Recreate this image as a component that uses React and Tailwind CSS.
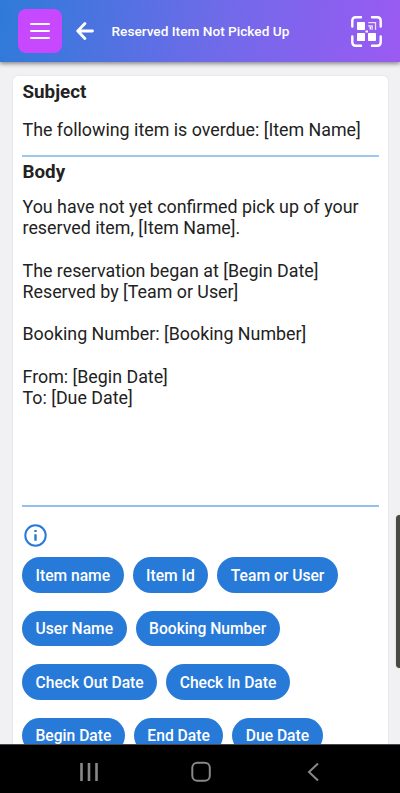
import React from "react";

const chipRows = [
  ["Item name", "Item Id", "Team or User"],
  ["User Name", "Booking Number"],
  ["Check Out Date", "Check In Date"],
  ["Begin Date", "End Date", "Due Date"],
];

const message = `You have not yet confirmed pick up of your
reserved item, [Item Name].

The reservation began at [Begin Date]
Reserved by [Team or User]

Booking Number: [Booking Number]

From: [Begin Date]
To: [Due Date]`;

const BackIcon = () => (
  <svg width="18" height="18" viewBox="0 0 18 18" fill="none">
    <path
      d="M8.9 1.6 1.7 9l7.2 7.4M2 9h14.5"
      stroke="white"
      strokeWidth="2.8"
      strokeLinecap="round"
      strokeLinejoin="round"
    />
  </svg>
);

const ScanIcon = () => (
  <svg width="31" height="31" viewBox="0 0 31 31" fill="none">
    <path
      d="M1.3 10.5V4.8Q1.3 1.3 4.8 1.3H10M21 1.3h5.2q3.5 0 3.5 3.5v5.7M29.7 20.5v5.7q0 3.5-3.5 3.5H21M10 29.7H4.8q-3.5 0-3.5-3.5v-5.7"
      stroke="white"
      strokeWidth="2.4"
      strokeLinecap="round"
    />
    <rect x="6" y="6" width="8" height="8" rx="0.7" fill="white" />
    <rect x="6" y="17" width="8" height="8" rx="0.7" fill="white" />
    <rect x="17" y="17" width="8" height="8" rx="0.7" fill="white" />
    <rect x="14.5" y="14.5" width="2.5" height="2" fill="white" />
    <path d="M17.2 6.7h7.3v7.3M17.2 10h4v3.8" stroke="white" strokeOpacity="0.8" strokeWidth="1.3" />
    <rect x="18.6" y="11" width="1.5" height="2.5" fill="white" />
  </svg>
);

const Header = () => (
  <header className="relative z-10 h-[62px] shrink-0 flex items-center pl-[18px] pr-[18px] bg-[linear-gradient(100deg,#2e7bd9_0%,#706ae9_55%,#9b5af3_100%)] shadow-[0_2px_4px_rgba(0,0,0,0.42)]">
    <button className="size-11 rounded-lg bg-[#c848ff] flex flex-col items-center justify-center gap-[5px]">
      <span className="w-5 h-[2px] rounded-full bg-white" />
      <span className="w-5 h-[2px] rounded-full bg-white" />
      <span className="w-5 h-[2px] rounded-full bg-white" />
    </button>
    <button className="ml-[14px]">
      <BackIcon />
    </button>
    <h1 className="ml-[17.5px] mt-px text-[13.65px] font-medium text-white whitespace-nowrap">
      Reserved Item Not Picked Up
    </h1>
    <button className="ml-auto">
      <ScanIcon />
    </button>
  </header>
);

const InfoIcon = () => (
  <svg width="23" height="23" viewBox="0 0 23 23" fill="none">
    <circle cx="11.5" cy="11.5" r="10.2" stroke="#287ad8" strokeWidth="2" />
    <path d="M11.5 6v2.1M11.5 10.2v6.6" stroke="#287ad8" strokeWidth="2.4" />
  </svg>
);

const SystemBar = () => (
  <nav className="h-[49px] shrink-0 bg-black border-t border-[#4a4a4a] text-[#888] relative z-10 flex items-center pt-[7px] pb-[1px]">
    <svg width="400" height="40" viewBox="0 0 400 40" fill="none" stroke="currentColor" strokeWidth="2">
      <path d="M81.5 11v18M89 11v18M96.5 11v18" strokeWidth="2.6" />
      <rect x="192.3" y="10.7" width="17.5" height="18" rx="5" />
      <path d="m318 11.5-9 8.5 9 8.5" />
    </svg>
  </nav>
);

const App = () => {
  return (
    <div className="h-screen w-full relative flex flex-col overflow-hidden bg-[#f1f1f3] text-[#222] font-[Roboto,sans-serif]">
      <Header />
      <main className="flex-1 min-h-0 overflow-hidden pl-[13px] pt-[14px] pr-3">
        <section className="h-[900px] bg-white rounded-[5px] shadow-[0_0_2px_rgba(0,0,0,0.12)] px-[9px]">
          <div className="h-[81px] border-b-2 border-[#9cc9ee]">
            <h2 className="pt-[5px] pl-[0.5px] text-[18.8px] leading-[22px] font-bold">Subject</h2>
            <p className="mt-[15.8px] pl-[0.5px] text-[17.83px] leading-[21.2px] whitespace-nowrap">
              The following item is overdue: [Item Name]
            </p>
          </div>
          <div className="h-[350px] border-b-2 border-[#93c0ee]">
            <h2 className="pt-1 pl-[0.5px] text-[18.8px] leading-[22px] font-bold">Body</h2>
            <p className="mt-[13px] pl-[0.5px] text-[17.83px] leading-[21.2px] whitespace-pre">{message}</p>
          </div>
          <div className="pt-[16.5px] pl-[2px]">
            <InfoIcon />
          </div>
          <div className="mt-[10.8px] flex flex-col gap-[18px]">
            {chipRows.map((row, i) => (
              <div key={i} className="flex gap-[9px]">
                {row.map((label) => (
                  <button
                    key={label}
                    className="h-[35.5px] px-[13.5px] pt-px rounded-full bg-[#287ad8] text-white text-[15.63px] font-medium whitespace-nowrap"
                  >
                    {label}
                  </button>
                ))}
              </div>
            ))}
          </div>
        </section>
      </main>
      <SystemBar />
      {/* edge panel handle */}
      <div className="absolute right-0 top-[515px] w-1 h-[153px] rounded-l-[4px] bg-[#484845] shadow-[0_0_1px_#777]" />
    </div>
  );
};

export default App;
